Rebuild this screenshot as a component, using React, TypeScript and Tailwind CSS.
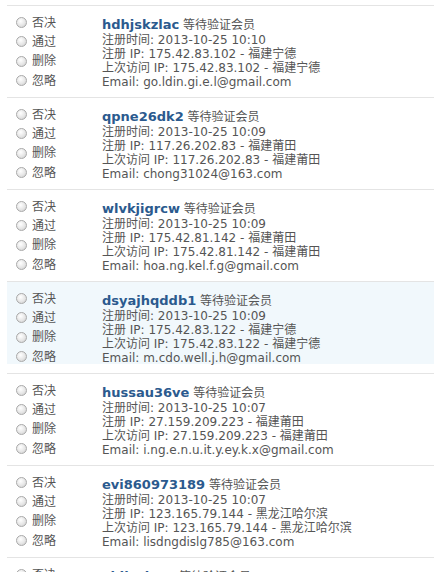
import React from "react";

type Member = {
  name: string;
  time: string;
  regIp: string;
  lastIp: string;
  email: string;
  active?: boolean;
};

const members: Member[] = [
  { name: "hdhjskzlac", time: "2013-10-25 10:10", regIp: "175.42.83.102 - 福建宁德", lastIp: "175.42.83.102 - 福建宁德", email: "go.ldin.gi.e.l@gmail.com" },
  { name: "qpne26dk2", time: "2013-10-25 10:09", regIp: "117.26.202.83 - 福建莆田", lastIp: "117.26.202.83 - 福建莆田", email: "chong31024@163.com" },
  { name: "wlvkjigrcw", time: "2013-10-25 10:09", regIp: "175.42.81.142 - 福建莆田", lastIp: "175.42.81.142 - 福建莆田", email: "hoa.ng.kel.f.g@gmail.com" },
  { name: "dsyajhqddb1", time: "2013-10-25 10:09", regIp: "175.42.83.122 - 福建宁德", lastIp: "175.42.83.122 - 福建宁德", email: "m.cdo.well.j.h@gmail.com", active: true },
  { name: "hussau36ve", time: "2013-10-25 10:07", regIp: "27.159.209.223 - 福建莆田", lastIp: "27.159.209.223 - 福建莆田", email: "i.ng.e.n.u.it.y.ey.k.x@gmail.com" },
  { name: "evi860973189", time: "2013-10-25 10:07", regIp: "123.165.79.144 - 黑龙江哈尔滨", lastIp: "123.165.79.144 - 黑龙江哈尔滨", email: "lisdngdislg785@163.com" },
  { name: "xjdkwlsqe", time: "2013-10-25 10:06", regIp: "175.42.83.96 - 福建宁德", lastIp: "175.42.83.96 - 福建宁德", email: "kel.ly.m.o@gmail.com" },
];

const actions = ["否决", "通过", "删除", "忽略"];

function Radio() {
  return (
    <span className="inline-block w-[11px] h-[11px] rounded-full border border-[#a9a9a9] bg-[radial-gradient(circle_at_40%_35%,#ffffff_0%,#e6e6e6_55%,#c9c9c9_100%)] shrink-0" />
  );
}

function Row({ m }: { m: Member }) {
  return (
    <div className="border-t border-[#e4e4e4] pb-[9px]">
      <div className={`flex h-[82px] ${m.active ? "bg-[#f1f8fc]" : ""}`}>
        <div className="w-[95px] shrink-0 pl-[9px] pt-[7px]">
          {actions.map((a) => (
            <label key={a} className="flex items-center gap-[5px] h-[19.33px] text-[12px]">
              <Radio />
              <span>{a}</span>
            </label>
          ))}
        </div>
        <div className="leading-[14px] text-[12px] pt-[12px] whitespace-nowrap">
          <div className="mb-[1px]">
            <a className="font-bold text-[13px] text-[#2b5a8e]">{m.name}</a> 等待验证会员
          </div>
          <div>注册时间: {m.time}</div>
          <div>注册 IP: {m.regIp}</div>
          <div>上次访问 IP: {m.lastIp}</div>
          <div>Email: {m.email}</div>
        </div>
      </div>
    </div>
  );
}

export default function App() {
  return (
    <div
      className="bg-white text-[#555] pl-[7px] pt-[5px] h-[572px] overflow-hidden"
      style={{ fontFamily: 'Verdana, "DejaVu Sans", "Noto Sans CJK SC", sans-serif' }}
    >
      {members.map((m) => (
        <Row key={m.name} m={m} />
      ))}
    </div>
  );
}
